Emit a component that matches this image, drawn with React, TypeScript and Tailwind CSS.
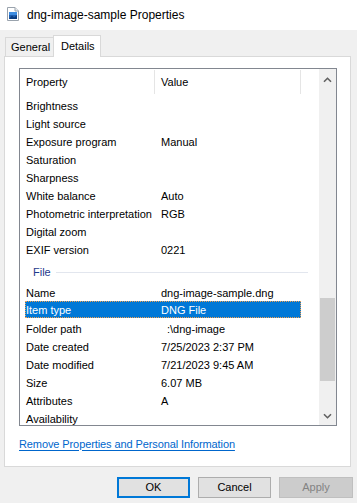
import React from "react";

type Row = { name: string; value?: string; selected?: boolean; indent?: boolean };

const top: Row[] = [
  { name: "Brightness" },
  { name: "Light source" },
  { name: "Exposure program", value: "Manual" },
  { name: "Saturation" },
  { name: "Sharpness" },
  { name: "White balance", value: "Auto" },
  { name: "Photometric interpretation", value: "RGB" },
  { name: "Digital zoom" },
  { name: "EXIF version", value: "0221" },
];

const file: Row[] = [
  { name: "Name", value: "dng-image-sample.dng" },
  { name: "Item type", value: "DNG File", selected: true },
  { name: "Folder path", value: ":\\dng-image", indent: true },
  { name: "Date created", value: "7/25/2023 2:37 PM" },
  { name: "Date modified", value: "7/21/2023 9:45 AM" },
  { name: "Size", value: "6.07 MB" },
  { name: "Attributes", value: "A" },
  { name: "Availability" },
];

function PropRow({ r }: { r: Row }) {
  if (r.selected) {
    return (
      <div className="h-[18px] shrink-0 flex items-start pl-[5px]">
        <div className="w-[276px] h-[17px] bg-[#0078d7] border border-dotted border-[#f0a050] flex items-center pt-[1px] text-white">
          <span className="w-[135px] shrink-0 whitespace-nowrap">{r.name}</span>
          <span className="whitespace-nowrap">{r.value}</span>
        </div>
      </div>
    );
  }
  return (
    <div className="h-[18px] shrink-0 flex items-center pt-[2px]">
      <span className="w-[135px] shrink-0 pl-[6px] whitespace-nowrap">{r.name}</span>
      <span className={"whitespace-nowrap " + (r.indent ? "pl-[12px]" : "pl-[6px]")}>{r.value}</span>
    </div>
  );
}

function Chevron({ down }: { down?: boolean }) {
  return (
    <svg width="9" height="6" viewBox="0 0 9 6">
      <path
        d={down ? "M1 1.2 L4.5 4.7 L8 1.2" : "M1 4.8 L4.5 1.3 L8 4.8"}
        fill="none"
        stroke="#606060"
        strokeWidth="1.6"
      />
    </svg>
  );
}

export default function App() {
  return (
    <div className="w-[357px] h-[503px] bg-[#f0f0f0] flex flex-col overflow-hidden font-['Liberation_Sans',Arial,sans-serif] text-[11px] text-black">
      {/* title bar */}
      <div className="h-[30px] bg-white flex items-center shrink-0">
        <svg width="12" height="14" viewBox="0 0 12 14" className="ml-[7px] -mt-[2px]">
          <path d="M0.5 0.5 H8 L11.5 4 V13.5 H0.5 Z" fill="#ffffff" stroke="#9aa3ad" />
          <path d="M8 0.5 V4 H11.5" fill="#e8ebee" stroke="#9aa3ad" />
          <rect x="2" y="5" width="8" height="7" fill="#1f5fb0" />
          <rect x="2" y="5" width="8" height="3" fill="#3d8ce0" />
          <path d="M2 12 L5 8.5 L7 10.5 L10 8 V12 Z" fill="#0b3d80" />
        </svg>
        <span className="ml-[8px] text-[12px] text-black">dng-image-sample Properties</span>
      </div>

      {/* tabs */}
      <div className="h-[26px] flex items-end pl-[5px] shrink-0 relative z-10">
        <div className="w-[49px] h-[19px] border border-b-0 border-[#d9d9d9] bg-[#f0f0f0] flex items-center pl-[5px] pt-[1px]">
          General
        </div>
        <div className="w-[48px] h-[22px] -ml-px -mb-px bg-white border border-b-0 border-[#d9d9d9] flex items-center pl-[7px] pb-[1px]">
          Details
        </div>
      </div>

      {/* panel */}
      <div className="ml-[4px] w-[347px] h-[411px] shrink-0 bg-white border border-[#d9d9d9] flex flex-col">
        <div className="mt-[11px] ml-[14px] w-[318px] h-[358px] border border-[#828790] flex overflow-hidden">
          <div className="flex-1 flex flex-col overflow-hidden">
            <div className="h-[27px] flex items-start shrink-0">
              <div className="mt-[1px] h-[24px] w-[135px] border-r border-[#e5e5e5] flex items-center pl-[6px] pt-[1px]">
                Property
              </div>
              <div className="mt-[1px] h-[24px] w-[146px] border-r border-[#e5e5e5] flex items-center pl-[6px] pt-[1px]">
                Value
              </div>
            </div>
            {top.map((r) => (
              <PropRow key={r.name} r={r} />
            ))}
            <div className="h-[25px] flex items-center shrink-0 pl-[13px] pt-[3px]">
              <span className="text-[#1e3a8c]">File</span>
              <div className="flex-1 h-px bg-[#e2e6ee] ml-[5px] mr-[11px]" />
            </div>
            {file.map((r) => (
              <PropRow key={r.name} r={r} />
            ))}
          </div>
          <div className="w-[17px] bg-[#f0f0f0] relative shrink-0">
            <div className="h-[21px] flex items-center justify-center">
              <Chevron />
            </div>
            <div className="absolute left-[1px] right-[1px] top-[229px] h-[83px] bg-[#cdcdcd]" />
            <div className="absolute bottom-0 left-0 right-0 h-[19px] flex items-center justify-center">
              <Chevron down />
            </div>
          </div>
        </div>
        <div className="mt-[11px] ml-[14px] h-[14px] flex items-center">
          <span className="text-[#0066cc] underline underline-offset-[2px] whitespace-nowrap tracking-[-0.1px]">
            Remove Properties and Personal Information
          </span>
        </div>
      </div>

      {/* buttons */}
      <div className="mt-[10px] ml-[117px] flex gap-[8px] shrink-0">
        <div className="w-[73px] h-[21px] bg-[#e1e1e1] border-2 border-[#0078d7] flex items-center justify-center">
          OK
        </div>
        <div className="w-[73px] h-[21px] bg-[#e1e1e1] border border-[#adadad] flex items-center justify-center">
          Cancel
        </div>
        <div className="w-[74px] h-[21px] bg-[#cccccc] border border-[#bfbfbf] text-[#838383] flex items-center justify-center">
          Apply
        </div>
      </div>
    </div>
  );
}
